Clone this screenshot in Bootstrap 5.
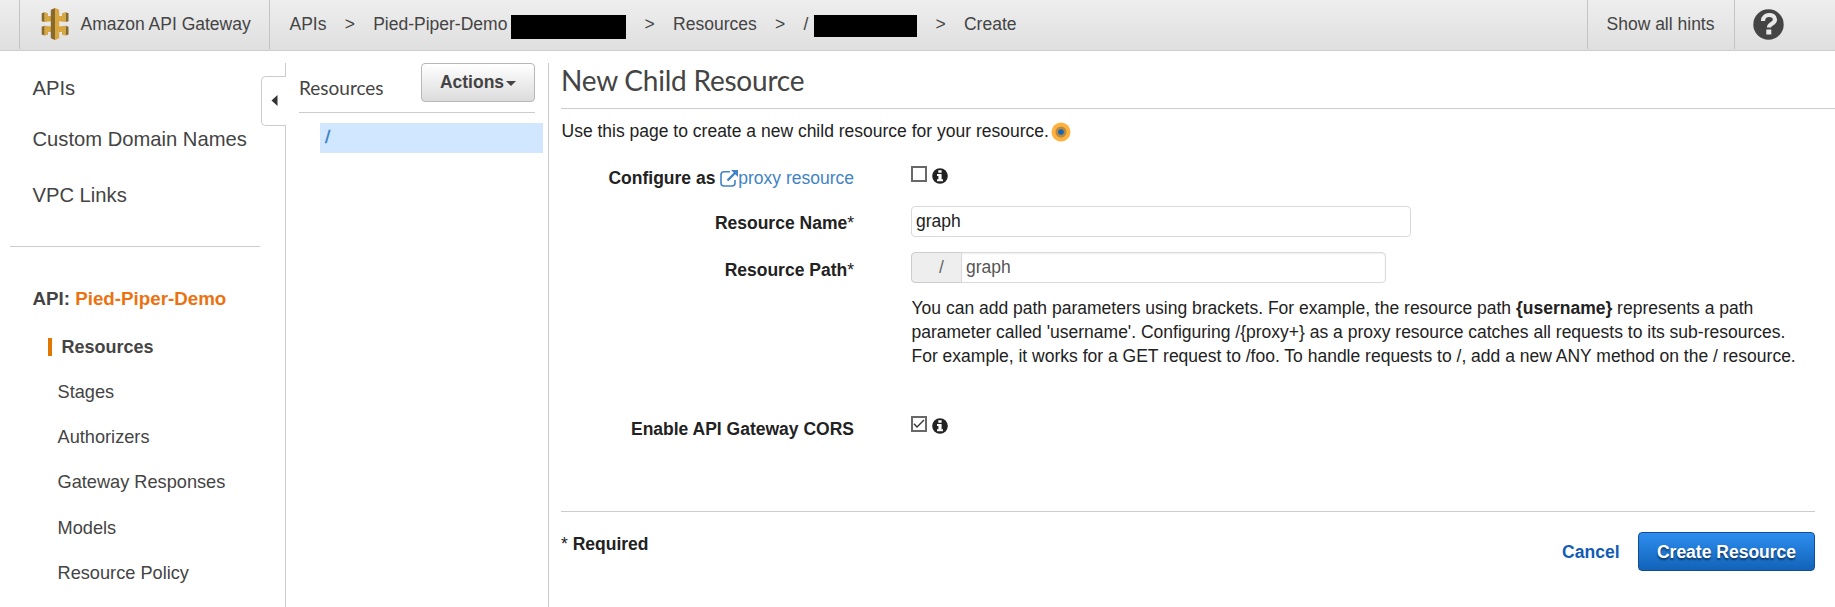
<!DOCTYPE html>
<html lang="en">
<head>
<meta charset="utf-8">
<meta name="viewport" content="width=device-width, initial-scale=1">
<title>Amazon API Gateway - Create Resource</title>
<link href="https://cdn.jsdelivr.net/npm/bootstrap@5.3.0/dist/css/bootstrap.min.css" rel="stylesheet">
<style>
  body { font: 17.5px/24px "Liberation Sans", Arial, sans-serif; color: #222; background: #fff; height: 607px; overflow: hidden; }
  a { text-decoration: none; }
  .topbar { height: 51px; padding: 0; background: linear-gradient(#eee, #dfdfdf); border-bottom: 1px solid #ccc; color: #444; flex-wrap: nowrap; justify-content: flex-start; align-items: flex-start; }
  .topbar a { color: #444; }
  .brand { margin-left: 19px; width: 251px; height: 49px; border: solid #c4c4c4; border-width: 0 1px; padding: 12px 0 0 60.5px; position: relative; white-space: nowrap; }
  .brand svg { position: absolute; left: 20px; top: 7px; }
  .crumbs { padding: 12px 0 0 19.500px; white-space: nowrap; }
  .crumbs .sep { width: 46.700px; text-align: center; }
  .redacted { background: #000; display: block; }
  .topright { height: 49px; border-left: 1px solid #c4c4c4; padding-top: 12px; }
  .workspace { height: 556px; padding-top: 12px; }
  .sidebar { width: 286px; border-right: 1px solid #ccc; position: relative; color: #444; }
  .sidebar a { display: block; color: #444; line-height: 24px; white-space: nowrap; }
  .primary a { font-size: 20.2px; padding-left: 32.5px; }
  .sidebar hr { margin: 39px 25px 40px 10px; }
  hr { border-top: 1px solid #ccc; opacity: 1; margin: 0; }
  .api-name { font-size: 18.75px; font-weight: bold; padding-left: 32.5px; }
  .api-name span { color: #ec7211; }
  .secondary { margin-top: 23px; }
  .secondary a { font-size: 18.2px; padding-left: 57.5px; margin-bottom: 21.2px; }
  .secondary a.active { font-weight: bold; font-size: 18px; padding-left: 9.5px; margin-left: 48px; border-left: 4px solid #e07700; line-height: 18px; margin-top: 27px; margin-bottom: 24px; }
  .collapse-tab { position: absolute; left: 261px; top: 13px; width: 25px; height: 50px; background: #fff; border: 1px solid #ccc; border-right: 0; border-radius: 5px 0 0 5px; padding: 0; }
  .collapse-tab svg { position: absolute; left: 9px; top: 18px; }
  .tree { width: 263px; border-right: 1px solid #ccc; padding-left: 13px; }
  .tree-head { height: 49px; width: 236px; }
  .tree-title { font-family: Lato, sans-serif; font-size: 19px; color: #444; padding-top: 13px; }
  .btn-actions { width: 114px; height: 39px; padding: 0; font-size: 17.5px; font-weight: bold; color: #444; border: 1px solid #b7b7b7; border-radius: 4px; background: linear-gradient(#fff, #dcdcdc); line-height: 35px; }
  .btn-actions::after { margin-left: 2px; border-top-width: 5px; border-left-width: 5px; border-right-width: 5px; vertical-align: 2px; }
  .node { display: block; margin: 10px 5px 0 21px; height: 30px; background: #d0e7ff; color: #3b7cc4; padding: 2px 5px; font-size: 19px; -webkit-text-stroke: .3px; }
  .detail { padding-left: 12px; min-width: 0; }
  .detail h1 { font: 28px/36px Lato, sans-serif; letter-spacing: -.22px; color: #444; margin: -1px 0 0; height: 46px; white-space: nowrap; }
  .intro { margin: 10px 0 0 .5px; height: 47px; }
  .intro svg { vertical-align: -5px; margin-left: 2px; }
  .form-grid { display: grid; grid-template-columns: 293px 1fr; column-gap: 57px; grid-template-rows: 40px 46px 164px 95px; }
  .form-grid label { text-align: right; font-weight: bold; }
  .form-grid label[for] { padding-top: 5px; }
  .form-grid label[for=rpath], .form-grid .cors-label { margin-top: 1px; }
  .form-grid .star { font-weight: normal; }
  .form-grid label a { font-weight: normal; color: #4183c4; }
  .choice { display: flex; gap: 5px; }
  .box { appearance: none; width: 16px; height: 16px; border: 2px solid #686868; background: #fff; margin: 0; }
  .box:checked { background: #fff url("data:image/svg+xml,%3Csvg xmlns='http://www.w3.org/2000/svg' viewBox='0 0 12 12'%3E%3Cpath d='M1 5.8L4 9 11 2' fill='none' stroke='%23333' stroke-width='1.4'/%3E%3C/svg%3E") center/12px no-repeat; }
  .choice svg { margin-top: 2px; }
  .form-grid .form-control { width: 500px; height: 31px; padding: 0 4px; font-size: 17.5px; line-height: 27px; color: #222; border: 1px solid #d9d9d9; border-radius: 4px; }
  .form-grid .input-group { width: 475px; height: 31px; flex-wrap: nowrap; }
  .form-grid .input-group-text { flex: none; width: 51px; padding: 0 0 2px 27px; font-size: 17.5px; line-height: 24px; color: #666; background: #eee; border: 1px solid #ccc; border-radius: 4px 0 0 4px; }
  .form-grid .input-group .form-control { color: #555; box-shadow: inset 0 1px 2px #0001; background: #fff; }
  .help { width: 900px; margin: 13px 0 0 .5px; }
  .form-foot { margin-right: 20px; border-top: 1px solid #ccc; padding-top: 20px; }
  .cancel { font-weight: bold; color: #125bb5; margin: 8px 18.5px 0 0; }
  .btn-create { width: 177px; height: 39px; padding: 0; font-size: 17.5px; line-height: 36px; font-weight: bold; color: #fff; border: 1px solid #114d93; border-radius: 4px; background: linear-gradient(#2e8def, #1263b8); text-shadow: 0 2px 2px #0008; }
</style>
</head>
<body>
<nav class="navbar topbar">
  <a class="brand" href="#">
    <svg width="30" height="34" viewBox="0 0 30 34">
      <path fill="#876929" d="M1.700 6.300l3-1V15l-3-.8zM1.700 19.800l3-1v9.800l-3-1zM28.500 6.300l-3-1V15l3-.8zM28.500 19.800l-3-1v9.800l3-1zM6 9h18v3H6zM6 22h18v3H6z"/>
      <path fill="#d9a741" d="M4.700 5.300L8 6.200V9h3v-.5h8V9h3V6.200l3.500-.9V15l-6.500-.7v-2.500h-8v2.500L4.700 15zM4.700 18.800l6.300.7V22h8v-2.500l6.500-.7v9.800L22 27.700V25h-3v.5h-8V25H8v2.700l-3.300.9z"/>
      <path fill="#876929" d="M15 1l-4.200 1.800v28.400L15 33z"/>
      <path fill="#d9a741" d="M15 1l4.200 1.800v28.400L15 33z"/>
    </svg>Amazon API Gateway</a>
  <div class="crumbs d-flex">
    <a href="#">APIs</a><span class="sep">&gt;</span>
    <a href="#">Pied-Piper-Demo</a><span class="redacted" style="width:115px;height:24px;margin:3px 0 0 4px"></span><span class="sep">&gt;</span>
    <a href="#">Resources</a><span class="sep">&gt;</span>
    <a href="#">/</a><span class="redacted" style="width:103px;height:22px;margin:3px 0 0 6px"></span><span class="sep">&gt;</span>
    <span>Create</span>
  </div>
  <a class="topright ms-auto" href="#" style="width:147px;padding-left:18.500px">Show all hints</a>
  <a class="topright" href="#" style="width:101px;padding:9px 0 0 18px">
    <svg class="d-block" width="31" height="31" viewBox="0 0 31 31"><circle cx="15.500" cy="15.500" r="15.200" fill="#444"/><path d="M10 12c0-8 12-7.500 12-1.500 0 4.500-6 4-6 8" fill="none" stroke="#e8e8e8" stroke-width="4.200"/><path fill="#e8e8e8" d="M13.300 20.500h5v5h-5z"/></svg>
  </a>
</nav>
<div class="workspace d-flex">
  <aside class="sidebar flex-shrink-0">
    <div class="primary">
      <a href="#" style="margin-top:13px">APIs</a>
      <a href="#" style="margin-top:27px">Custom Domain Names</a>
      <a href="#" style="margin-top:32px">VPC Links</a>
    </div>
    <hr>
    <div class="api-name">API: <span>Pied-Piper-Demo</span></div>
    <div class="secondary">
      <a class="active" href="#">Resources</a>
      <a href="#">Stages</a>
      <a href="#">Authorizers</a>
      <a href="#">Gateway Responses</a>
      <a href="#">Models</a>
      <a href="#">Resource Policy</a>
    </div>
    <button class="collapse-tab" aria-label="Collapse"><svg width="7" height="11" viewBox="0 0 7 11"><path d="M6.500 0v11L.5 5.500z" fill="#333"/></svg></button>
  </aside>
  <section class="tree flex-shrink-0">
    <div class="tree-head d-flex justify-content-between align-items-start">
      <div class="tree-title">Resources</div>
      <button class="btn btn-actions dropdown-toggle" type="button">Actions</button>
    </div>
    <hr style="width:236px">
    <a class="node" href="#">/</a>
  </section>
  <main class="detail flex-grow-1">
    <h1>New Child Resource</h1>
    <hr>
    <p class="intro">Use this page to create a new child resource for your resource.<svg width="20" height="20" viewBox="0 0 20 20"><circle cx="10" cy="10" r="9.500" fill="#ffb13d"/><circle cx="10" cy="10" r="5.500" fill="#b88a40"/><circle cx="10" cy="10" r="2.800" fill="#1166bb"/></svg></p>
    <form class="form-grid">
      <label>Configure as <a href="#"><svg width="18" height="18" viewBox="0 0 18 18" fill="none" stroke="#4183c4"><path stroke-width="1.600" d="M10 1.800H4a3 3 0 0 0-3 3V13a3 3 0 0 0 3 3h8a3 3 0 0 0 3-3v-3"/><path stroke-width="2.400" d="M7.500 10.500L15 3"/><path fill="#4183c4" stroke="none" d="M11 0h7v7z"/></svg>proxy resource</a></label>
      <div class="choice"><input class="box" type="checkbox"><svg width="16" height="16" viewBox="0 0 16 16"><circle cx="8" cy="8" r="7.800" fill="#222"/><path fill="#fff" d="M6.300 2.200h3.300v2.500H6.300zM5 6h4.600v5.300H11v1.900H5v-1.900h1.400V7.900H5z"/></svg></div>
      <label for="rname">Resource Name<span class="star">*</span></label>
      <div><input id="rname" class="form-control" type="text" value="graph"></div>
      <label for="rpath">Resource Path<span class="star">*</span></label>
      <div>
        <div class="input-group"><span class="input-group-text">/</span><input id="rpath" class="form-control" type="text" value="graph"></div>
        <p class="help">You can add path parameters using brackets. For example, the resource path <b>{username}</b> represents a path parameter called 'username'. Configuring /{proxy+} as a proxy resource catches all requests to its sub-resources. For example, it works for a GET request to /foo. To handle requests to /, add a new ANY method on the / resource.</p>
      </div>
      <label class="cors-label">Enable API Gateway CORS</label>
      <div class="choice"><input class="box" type="checkbox" checked><svg width="16" height="16" viewBox="0 0 16 16"><circle cx="8" cy="8" r="7.800" fill="#222"/><path fill="#fff" d="M6.300 2.200h3.300v2.500H6.300zM5 6h4.600v5.300H11v1.900H5v-1.900h1.400V7.900H5z"/></svg></div>
    </form>
    <div class="form-foot d-flex align-items-start">
      <div class="me-auto">* <b>Required</b></div>
      <a class="cancel" href="#">Cancel</a>
      <button class="btn btn-create" type="button">Create Resource</button>
    </div>
  </main>
</div>
<script src="https://cdn.jsdelivr.net/npm/bootstrap@5.3.0/dist/js/bootstrap.bundle.min.js"></script>
</body>
</html>
